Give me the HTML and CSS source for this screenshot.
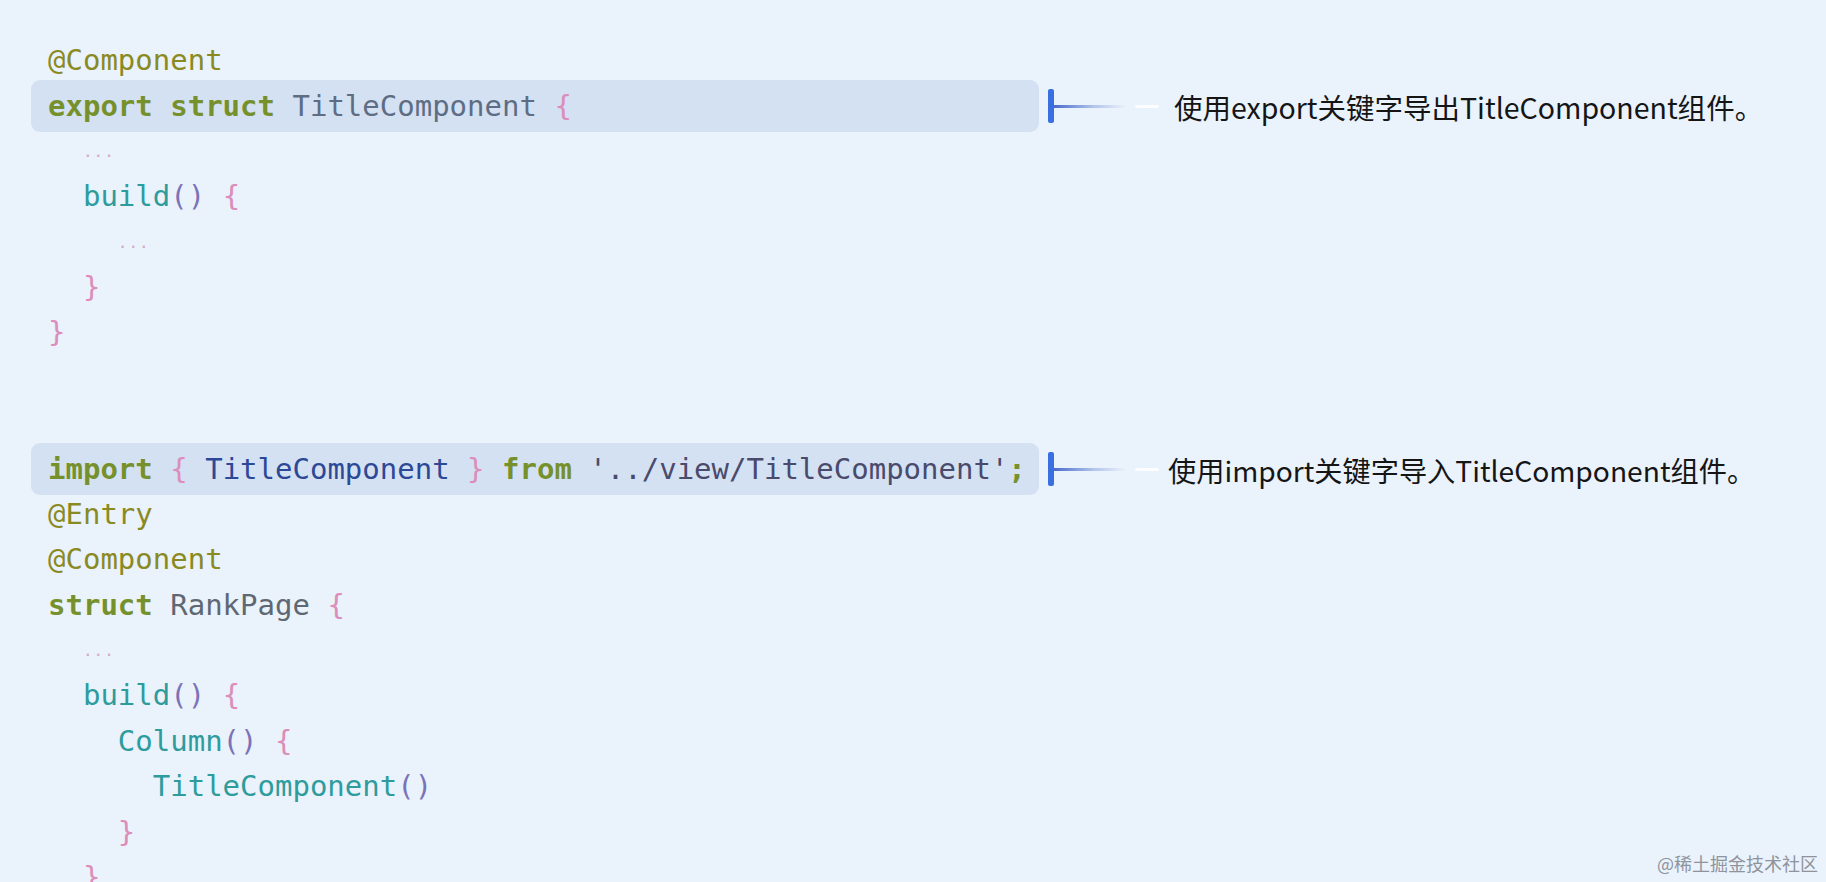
FILE: index.html
```html
<!DOCTYPE html>
<html lang="zh-CN">
<head>
<meta charset="utf-8">
<title>TitleComponent export / import</title>
<link rel="stylesheet" href="styles.css">
</head>
<body>
<main class="code">
  <div class="line"><span class="deco">@Component</span></div>
  <div class="row">
    <div class="line hl"><span class="kw">export</span> <span class="kw">struct</span> <span class="type">TitleComponent</span> <span class="brace">{</span></div>
    <div class="note"><span class="bar"></span><span class="link"></span><span class="dash"></span><span class="note-text">使用export关键字导出TitleComponent组件。</span></div>
  </div>
  <div class="line">  <span class="dots">···</span></div>
  <div class="line">  <span class="fn">build</span><span class="paren">()</span> <span class="brace">{</span></div>
  <div class="line">    <span class="dots">···</span></div>
  <div class="line">  <span class="brace">}</span></div>
  <div class="line"><span class="brace">}</span></div>
  <div class="line"> </div>
  <div class="line"> </div>
  <div class="row">
    <div class="line hl"><span class="kw">import</span> <span class="brace">{</span> <span class="imp">TitleComponent</span> <span class="brace">}</span> <span class="kw">from</span> <span class="str">'../view/TitleComponent'</span><span class="semi">;</span></div>
    <div class="note"><span class="bar"></span><span class="link"></span><span class="dash"></span><span class="note-text note-text--import">使用import关键字导入TitleComponent组件。</span></div>
  </div>
  <div class="line"><span class="deco">@Entry</span></div>
  <div class="line"><span class="deco">@Component</span></div>
  <div class="line"><span class="kw">struct</span> <span class="name">RankPage</span> <span class="brace">{</span></div>
  <div class="line">  <span class="dots">···</span></div>
  <div class="line">  <span class="fn">build</span><span class="paren">()</span> <span class="brace">{</span></div>
  <div class="line">    <span class="fn">Column</span><span class="paren">()</span> <span class="brace">{</span></div>
  <div class="line">      <span class="fn">TitleComponent</span><span class="paren">()</span></div>
  <div class="line">    <span class="brace">}</span></div>
  <div class="line">  <span class="brace">}</span></div>
</main>
<div class="watermark">@稀土掘金技术社区</div>
</body>
</html>
```

FILE: styles.css
```css
html, body {
  margin: 0;
  padding: 0;
  height: 100%;
  overflow: hidden;
}

body {
  background: #eaf2fc;
  position: relative;
}

.code {
  padding: 38px 0 0 48px;
  font-family: "DejaVu Sans Mono", "Liberation Mono", monospace;
  font-size: 29px;
}

.line {
  white-space: pre;
  height: 45.4px;
  line-height: 45.4px;
  color: #5c6b80;
}

.row {
  display: flex;
  align-items: center;
  height: 45.4px;
}

.hl {
  flex: 0 0 auto;
  box-sizing: border-box;
  width: 1008px;
  height: 52px;
  line-height: 52px;
  margin-left: -17px;
  padding-left: 17px;
  background: #d3e1f3;
  border-radius: 9px;
}

.deco { color: #8a8a22; }
.kw { color: #76912c; font-weight: bold; }
.type { color: #5e6d84; }
.imp { color: #2c4896; }
.name { color: #5f6872; }
.brace { color: #dc8dba; }
.fn { color: #2e9c9c; }
.paren { color: #7b72b8; }
.str { color: #4a4a6c; }
.semi { color: #76912c; font-weight: bold; }
.dots {
  color: #d2a9c4;
  font-size: 16px;
  letter-spacing: 1px;
}

.note {
  display: flex;
  align-items: center;
  margin-left: 9px;
}

.bar {
  width: 6px;
  height: 34px;
  border-radius: 2px;
  background: #3a6fe2;
}

.link {
  width: 72px;
  height: 3px;
  background: linear-gradient(to right, #4b6ccc, rgba(120, 150, 220, 0.5) 55%, rgba(234, 242, 252, 0));
}

.dash {
  width: 24px;
  height: 3px;
  margin-left: 9px;
  background: rgba(255, 255, 255, 0.9);
  border-radius: 2px;
}

.note-text {
  margin-left: 15px;
  font-family: "Noto Sans CJK SC", "Noto Sans", sans-serif;
  font-size: 28.5px;
  color: #151515;
  white-space: nowrap;
}

.note-text--import {
  margin-left: 9px;
  font-size: 28.2px;
}

.watermark {
  position: absolute;
  right: 8px;
  bottom: 6px;
  font-family: "Noto Sans CJK SC", sans-serif;
  font-size: 18px;
  color: #8f949c;
}
```
